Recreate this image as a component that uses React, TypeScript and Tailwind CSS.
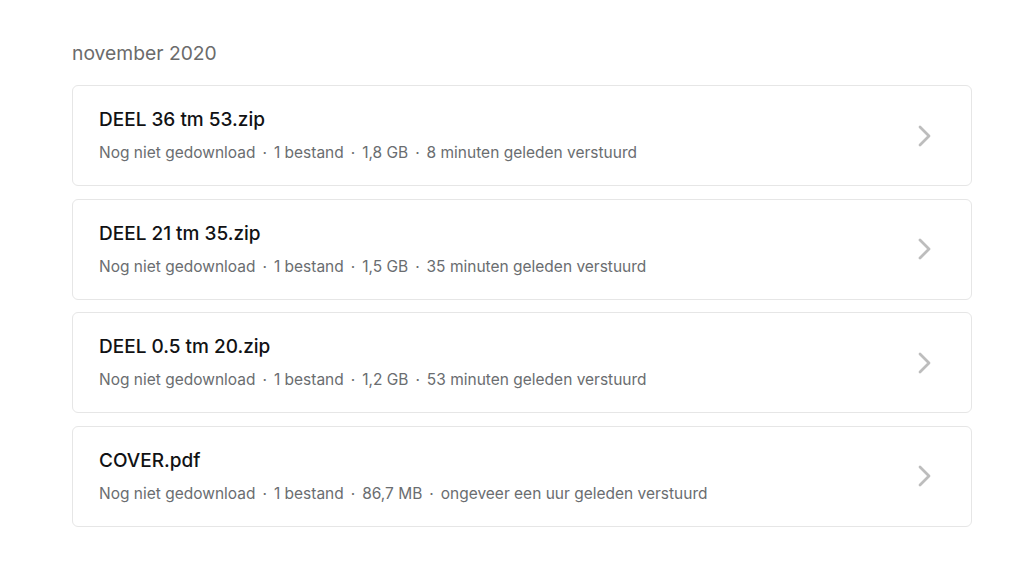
const transfers = [
  { name: "DEEL 36 tm 53.zip", size: "1,8 GB", when: "8 minuten geleden verstuurd" },
  { name: "DEEL 21 tm 35.zip", size: "1,5 GB", when: "35 minuten geleden verstuurd" },
  { name: "DEEL 0.5 tm 20.zip", size: "1,2 GB", when: "53 minuten geleden verstuurd" },
  { name: "COVER.pdf", size: "86,7 MB", when: "ongeveer een uur geleden verstuurd" },
];

const Dot = () => <span className="mx-[2.6px]">·</span>;

const App = () => {
  return (
    <div
      className="w-[1031px] h-[564px] bg-white px-[72px] pt-[38px]"
      style={{ fontFamily: "Inter, 'Noto Sans', sans-serif" }}
    >
      <h2 className="text-[19.3px] leading-[28px] text-[#6b6b6b] pt-[1px]">november 2020</h2>
      <div className="flex flex-col gap-[12.6px] w-[900px] mt-[18px]">
        {transfers.map((t) => (
          <div
            key={t.name}
            className="h-[101px] flex items-center justify-between border border-[#e6e6e6] rounded-[6px] pl-[26px] pr-[39px]"
          >
            <div className="flex flex-col">
              <p className="text-[19px] leading-[28px] text-[#111214] font-medium -mt-[2px]">{t.name}</p>
              <p className="text-[15.5px] leading-[22px] mt-[8px] -mb-[1px] text-[#6a6d70]">
                Nog niet gedownload <Dot /> 1 bestand <Dot /> {t.size} <Dot /> {t.when}
              </p>
            </div>
            <svg width="14" height="22" viewBox="0 0 14 22" fill="none">
              <polyline
                points="2,2 11,11 2,20"
                stroke="#bdbdbd"
                strokeWidth="2.8"
                strokeLinecap="round"
                strokeLinejoin="round"
              />
            </svg>
          </div>
        ))}
      </div>
    </div>
  );
};

export default App;
